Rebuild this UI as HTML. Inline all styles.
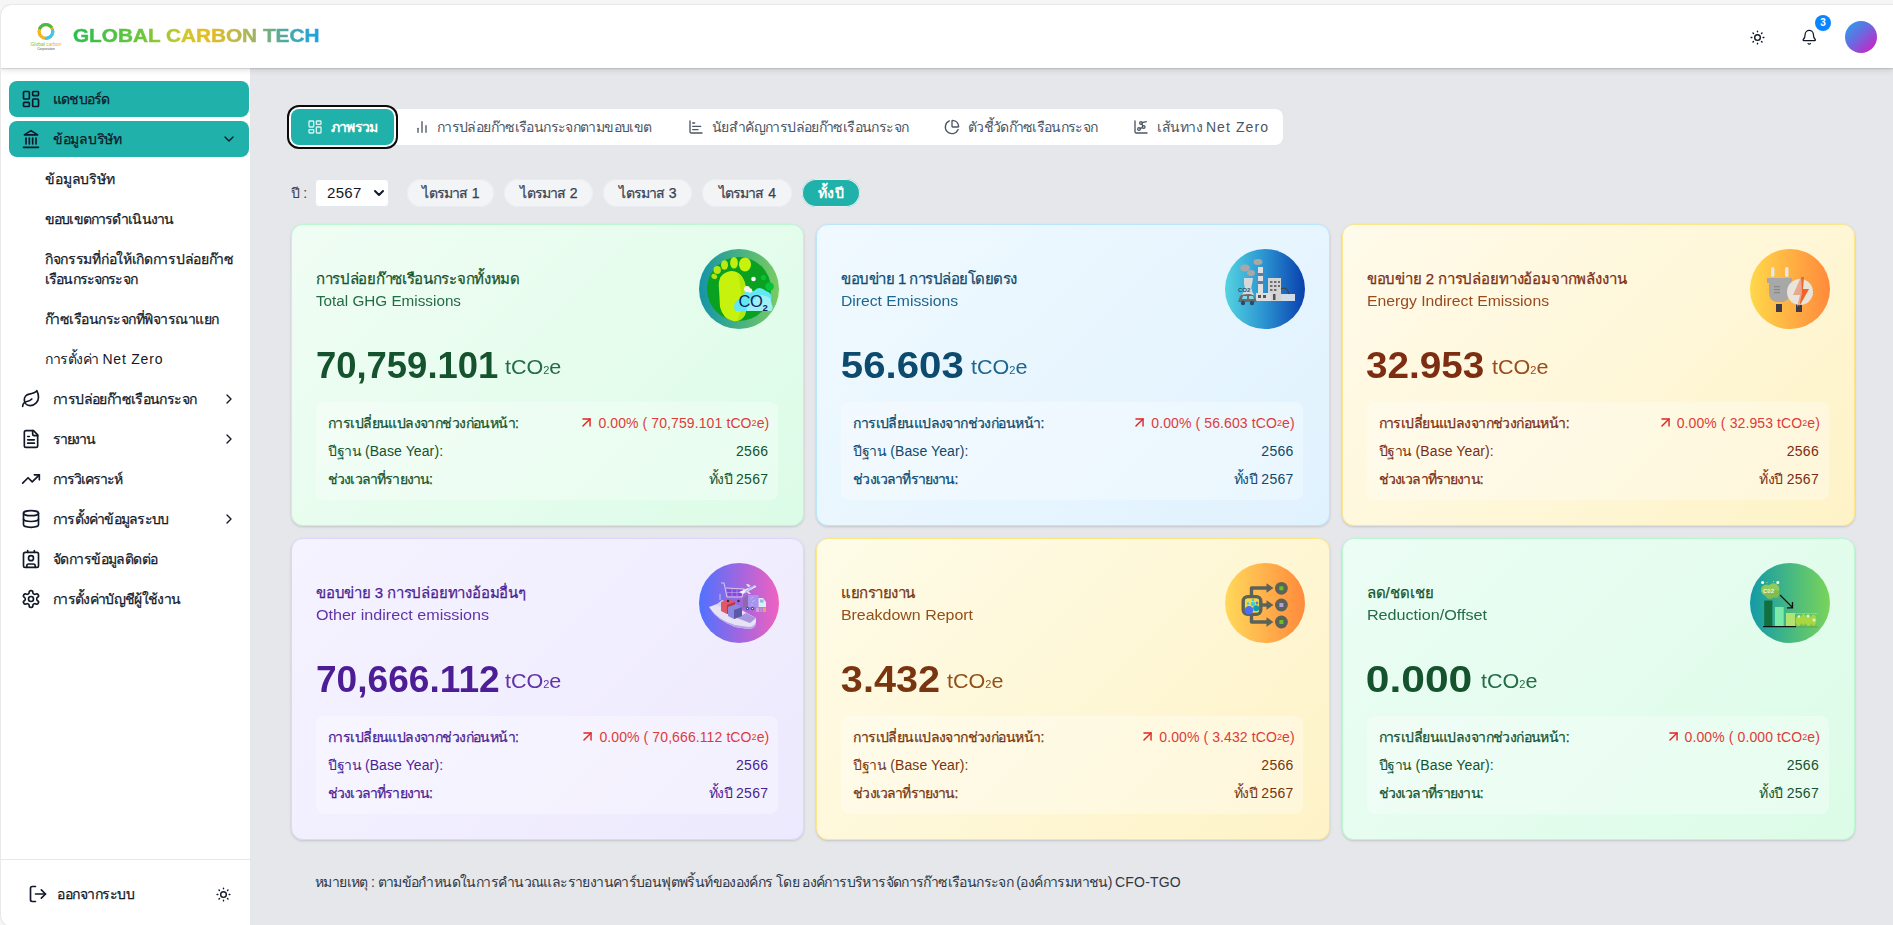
<!DOCTYPE html><html><head><meta charset="utf-8"><title>Global Carbon Tech</title><style>
*{box-sizing:border-box;margin:0;padding:0}
html,body{width:1893px;height:925px;overflow:hidden}
body{background:#f6f6f6;font-family:"Liberation Sans",sans-serif;color:#111827;position:relative}
.frame{position:absolute;left:1px;top:5px;width:1930px;height:921px;border-radius:10px;overflow:hidden;background:#e5e7eb;box-shadow:0 0 1.5px rgba(0,0,0,.28)}
.c{position:absolute;left:-1px;top:-5px;width:1893px;height:925px}
.abs{position:absolute}
.t{position:absolute;white-space:nowrap}
svg.i{position:absolute;fill:none;stroke:currentColor;stroke-linecap:round;stroke-linejoin:round;overflow:visible}
.hdr{position:absolute;z-index:5;left:0;top:5px;width:1893px;height:63px;background:#fff;box-shadow:0 1px 1px rgba(0,0,0,.10),0 2px 6px rgba(0,0,0,.12)}
.side{position:absolute;left:0;top:68px;width:250px;height:870px;background:#fff}
.mi{position:absolute;left:9px;width:240px;height:36px;border-radius:8px;background:#20b2aa}
.card{position:absolute;width:513.33px;height:302px;border-radius:12px;border:1px solid;box-shadow:0 1px 3px rgba(0,0,0,.10),0 1px 2px rgba(0,0,0,.06)}
.stat{position:absolute;width:462px;height:98px;border-radius:8px;background:rgba(255,255,255,.32)}
.pill{position:absolute;top:179px;height:28px;border-radius:14px;background:#f3f4f6;box-shadow:0 0 0 1px #e9edf2 inset}
</style></head><body>
<div class="frame"><div class="c">
<div class="hdr"></div><div class="abs" style="left:0;top:0;width:1893px;height:68px;z-index:6">
<svg class="abs" style="left:28px;top:19px;width:36px;height:34px" viewBox="0 0 36 34">
<g fill="none" stroke-width="3.3"><circle cx="17.9" cy="12.4" r="6.8" stroke="#f5b51c"/><circle cx="17.9" cy="12.4" r="6.8" stroke="#4cb848" stroke-dasharray="15 28" transform="rotate(-160 17.9 12.4)"/><circle cx="17.9" cy="12.4" r="6.8" stroke="#3cc8f0" stroke-dasharray="14 29" transform="rotate(-20 17.9 12.4)"/></g><circle cx="17.9" cy="12.4" r="5" fill="#fff"/>
<text x="18" y="27" font-size="5" text-anchor="middle" fill="#7cc242" font-family="Liberation Sans">Global <tspan fill="#f0b020">carbon</tspan></text>
<text x="18" y="31" font-size="3.4" text-anchor="middle" fill="#555" font-family="Liberation Sans">Corporation</text>
</svg>
<div class="t" style="left:73px;top:22.5px;font-size:19px;line-height:26px;font-weight:bold;transform:scaleX(1.093);transform-origin:1px 0;-webkit-text-stroke:0.5px transparent;background:linear-gradient(90deg,#2bbd4f 0%,#6cc63c 28%,#cfc72a 45%,#e5bd22 55%,#a9b55e 72%,#5fab8e 82%,#17a2e6 100%);-webkit-background-clip:text;background-clip:text;color:transparent">GLOBAL CARBON TECH</div>
<svg class="i" style="left:1748.5px;top:28.5px;width:17px;height:17px;color:#111827;stroke-width:2" viewBox="0 0 24 24" ><circle cx="12" cy="12" r="4"/><path d="M12 3v1"/><path d="M12 20v1"/><path d="M3 12h1"/><path d="M20 12h1"/><path d="m18.364 5.636-.707.707"/><path d="m6.343 17.657-.707.707"/><path d="m5.636 5.636.707.707"/><path d="m17.657 17.657.707.707"/></svg>
<svg class="i" style="left:1801px;top:29px;width:16.5px;height:16.5px;color:#111827;stroke-width:1.8" viewBox="0 0 24 24" ><path d="M10.268 21a2 2 0 0 0 3.464 0"/><path d="M3.262 15.326A1 1 0 0 0 4 17h16a1 1 0 0 0 .74-1.673C19.41 13.956 18 12.499 18 8A6 6 0 0 0 6 8c0 4.499-1.411 5.956-2.738 7.326"/></svg>
<div class="abs" style="left:1815px;top:15px;width:16px;height:16px;border-radius:8px;background:#0a84ff;color:#fff;font-size:10px;font-weight:bold;line-height:16px;text-align:center">3</div>
<div class="abs" style="left:1845px;top:21px;width:32px;height:32px;border-radius:16px;background:linear-gradient(135deg,#22a6f0 0%,#6a6ae0 45%,#e014bf 100%)"></div>
</div>
<div class="side"></div>
<div class="mi" style="top:81px"></div><div class="mi" style="top:121px"></div>
<svg class="i" style="left:21px;top:89px;width:20px;height:20px;color:#0f172a;stroke-width:2" viewBox="0 0 24 24" ><rect width="7" height="9" x="3" y="3" rx="1"/><rect width="7" height="5" x="14" y="3" rx="1"/><rect width="7" height="9" x="14" y="12" rx="1"/><rect width="7" height="5" x="3" y="16" rx="1"/></svg>
<div class="t" style="top:89.0px;font-size:14px;color:#0f172a;font-weight:normal;line-height:20px;letter-spacing:-0.833px;left:53px;-webkit-text-stroke:0.25px currentColor;">แดชบอร์ด</div>
<svg class="i" style="left:21px;top:129px;width:20px;height:20px;color:#0f172a;stroke-width:2" viewBox="0 0 24 24" ><line x1="3" x2="21" y1="22" y2="22"/><line x1="6" x2="6" y1="18" y2="11"/><line x1="10" x2="10" y1="18" y2="11"/><line x1="14" x2="14" y1="18" y2="11"/><line x1="18" x2="18" y1="18" y2="11"/><polygon points="12 2 20 7 4 7"/></svg>
<div class="t" style="top:129.0px;font-size:14px;color:#0f172a;font-weight:normal;line-height:20px;letter-spacing:-0.286px;left:53px;-webkit-text-stroke:0.25px currentColor;">ข้อมูลบริษัท</div>
<svg class="i" style="left:221px;top:131px;width:16px;height:16px;color:#0f172a;stroke-width:2" viewBox="0 0 24 24" ><path d="m6 9 6 6 6-6"/></svg>
<div class="t" style="top:169.0px;font-size:14px;color:#111827;font-weight:normal;line-height:20px;letter-spacing:-0.143px;left:45px;-webkit-text-stroke:0.25px currentColor;">ข้อมูลบริษัท</div>
<div class="t" style="top:209.0px;font-size:14px;color:#111827;font-weight:normal;line-height:20px;letter-spacing:-0.867px;left:45px;-webkit-text-stroke:0.25px currentColor;">ขอบเขตการดำเนินงาน</div>
<div class="t" style="top:249.0px;font-size:14px;color:#111827;font-weight:normal;line-height:20px;letter-spacing:-0.304px;left:45px;-webkit-text-stroke:0.25px currentColor;">กิจกรรมที่ก่อให้เกิดการปล่อยก๊าซ</div>
<div class="t" style="top:269.0px;font-size:14px;color:#111827;font-weight:normal;line-height:20px;letter-spacing:-0.858px;left:45px;-webkit-text-stroke:0.25px currentColor;">เรือนกระจกระจก</div>
<div class="t" style="top:309.0px;font-size:14px;color:#111827;font-weight:normal;line-height:20px;letter-spacing:-0.524px;left:45px;-webkit-text-stroke:0.25px currentColor;">ก๊าซเรือนกระจกที่พิจารณาแยก</div>
<div class="t" style="left:45px;top:349px;font-size:14px;line-height:20px;color:#111827"><span style="letter-spacing:-0.5px">การตั้งค่า</span> <span style="letter-spacing:0.8px">Net Zero</span></div>
<svg class="i" style="left:21px;top:389px;width:20px;height:20px;color:#111827;stroke-width:2" viewBox="0 0 24 24" ><path d="M11 20A7 7 0 0 1 9.8 6.1C15.5 5 17 4.48 19 2c1 2 2 4.18 2 8 0 5.5-4.78 10-10 10Z"/><path d="M2 21c0-3 1.85-5.36 5.08-6C9.5 14.52 12 13 13 12"/></svg>
<div class="t" style="top:389.0px;font-size:14px;color:#111827;font-weight:normal;line-height:20px;letter-spacing:-0.611px;left:53px;-webkit-text-stroke:0.25px currentColor;">การปล่อยก๊าซเรือนกระจก</div>
<svg class="i" style="left:221px;top:391px;width:16px;height:16px;color:#111827;stroke-width:2" viewBox="0 0 24 24" ><path d="m9 18 6-6-6-6"/></svg>
<svg class="i" style="left:21px;top:429px;width:20px;height:20px;color:#111827;stroke-width:2" viewBox="0 0 24 24" ><path d="M15 2H6a2 2 0 0 0-2 2v16a2 2 0 0 0 2 2h12a2 2 0 0 0 2-2V7Z"/><path d="M14 2v4a2 2 0 0 0 2 2h4"/><path d="M10 9H8"/><path d="M16 13H8"/><path d="M16 17H8"/></svg>
<div class="t" style="top:429.0px;font-size:14px;color:#111827;font-weight:normal;line-height:20px;letter-spacing:-1.2px;left:53px;-webkit-text-stroke:0.25px currentColor;">รายงาน</div>
<svg class="i" style="left:221px;top:431px;width:16px;height:16px;color:#111827;stroke-width:2" viewBox="0 0 24 24" ><path d="m9 18 6-6-6-6"/></svg>
<svg class="i" style="left:21px;top:469px;width:20px;height:20px;color:#111827;stroke-width:2" viewBox="0 0 24 24" ><polyline points="22 7 13.5 15.5 8.5 10.5 2 17"/><polyline points="16 7 22 7 22 13"/></svg>
<div class="t" style="top:469.0px;font-size:14px;color:#111827;font-weight:normal;line-height:20px;letter-spacing:-1.0px;left:53px;-webkit-text-stroke:0.25px currentColor;">การวิเคราะห์</div>
<svg class="i" style="left:21px;top:509px;width:20px;height:20px;color:#111827;stroke-width:2" viewBox="0 0 24 24" ><ellipse cx="12" cy="5" rx="9" ry="3"/><path d="M3 5V19A9 3 0 0 0 21 19V5"/><path d="M3 12A9 3 0 0 0 21 12"/></svg>
<div class="t" style="top:509.0px;font-size:14px;color:#111827;font-weight:normal;line-height:20px;letter-spacing:-0.786px;left:53px;-webkit-text-stroke:0.25px currentColor;">การตั้งค่าข้อมูลระบบ</div>
<svg class="i" style="left:221px;top:511px;width:16px;height:16px;color:#111827;stroke-width:2" viewBox="0 0 24 24" ><path d="m9 18 6-6-6-6"/></svg>
<svg class="i" style="left:21px;top:549px;width:20px;height:20px;color:#111827;stroke-width:2" viewBox="0 0 24 24" ><path d="M16 2v2"/><path d="M7 22v-2a2 2 0 0 1 2-2h6a2 2 0 0 1 2 2v2"/><path d="M8 2v2"/><circle cx="12" cy="11" r="3"/><rect x="3" y="4" width="18" height="18" rx="2"/></svg>
<div class="t" style="top:549.0px;font-size:14px;color:#111827;font-weight:normal;line-height:20px;letter-spacing:-0.583px;left:53px;-webkit-text-stroke:0.25px currentColor;">จัดการข้อมูลติดต่อ</div>
<svg class="i" style="left:21px;top:589px;width:20px;height:20px;color:#111827;stroke-width:2" viewBox="0 0 24 24" ><path d="M12.22 2h-.44a2 2 0 0 0-2 2v.18a2 2 0 0 1-1 1.73l-.43.25a2 2 0 0 1-2 0l-.15-.08a2 2 0 0 0-2.73.73l-.22.38a2 2 0 0 0 .73 2.73l.15.1a2 2 0 0 1 1 1.72v.51a2 2 0 0 1-1 1.74l-.15.09a2 2 0 0 0-.73 2.73l.22.38a2 2 0 0 0 2.73.73l.15-.08a2 2 0 0 1 2 0l.43.25a2 2 0 0 1 1 1.73V20a2 2 0 0 0 2 2h.44a2 2 0 0 0 2-2v-.18a2 2 0 0 1 1-1.73l.43-.25a2 2 0 0 1 2 0l.15.08a2 2 0 0 0 2.73-.73l.22-.39a2 2 0 0 0-.73-2.73l-.15-.08a2 2 0 0 1-1-1.74v-.5a2 2 0 0 1 1-1.74l.15-.09a2 2 0 0 0 .73-2.73l-.22-.38a2 2 0 0 0-2.73-.73l-.15.08a2 2 0 0 1-2 0l-.43-.25a2 2 0 0 1-1-1.73V4a2 2 0 0 0-2-2z"/><circle cx="12" cy="12" r="3"/></svg>
<div class="t" style="top:589.0px;font-size:14px;color:#111827;font-weight:normal;line-height:20px;letter-spacing:-0.667px;left:53px;-webkit-text-stroke:0.25px currentColor;">การตั้งค่าบัญชีผู้ใช้งาน</div>
<div class="abs" style="left:0;top:859px;width:250px;height:1px;background:#e2e8f0"></div>
<svg class="i" style="left:28px;top:884px;width:20px;height:20px;color:#111827;stroke-width:2" viewBox="0 0 24 24" ><path d="M9 21H5a2 2 0 0 1-2-2V5a2 2 0 0 1 2-2h4"/><polyline points="16 17 21 12 16 7"/><line x1="21" x2="9" y1="12" y2="12"/></svg>
<div class="t" style="top:884.0px;font-size:14px;color:#111827;font-weight:normal;line-height:20px;letter-spacing:-0.444px;left:57px;-webkit-text-stroke:0.25px currentColor;">ออกจากระบบ</div>
<svg class="i" style="left:214.5px;top:885.5px;width:17px;height:17px;color:#111827;stroke-width:2" viewBox="0 0 24 24" ><circle cx="12" cy="12" r="4"/><path d="M12 3v1"/><path d="M12 20v1"/><path d="M3 12h1"/><path d="M20 12h1"/><path d="m18.364 5.636-.707.707"/><path d="m6.343 17.657-.707.707"/><path d="m5.636 5.636.707.707"/><path d="m17.657 17.657.707.707"/></svg>
<div class="abs" style="left:291px;top:109px;width:992px;height:36px;border-radius:8px;background:#fff"></div>
<div class="abs" style="left:291px;top:109px;width:103px;height:36px;border-radius:8px;background:#20b2aa;box-shadow:0 0 0 2px #fff,0 0 0 4px #0b0b0b"></div>
<svg class="i" style="left:307px;top:119px;width:16px;height:16px;color:#d9f3f1;stroke-width:2" viewBox="0 0 24 24" ><rect width="7" height="9" x="3" y="3" rx="1"/><rect width="7" height="5" x="14" y="3" rx="1"/><rect width="7" height="9" x="14" y="12" rx="1"/><rect width="7" height="5" x="3" y="16" rx="1"/></svg>
<div class="t" style="top:117.0px;font-size:14px;color:#fff;font-weight:bold;line-height:20px;letter-spacing:-0.8px;left:331px;">ภาพรวม</div>
<svg class="i" style="left:414px;top:119px;width:16px;height:16px;color:#4b5563;stroke-width:2" viewBox="0 0 24 24" ><line x1="18" x2="18" y1="20" y2="10"/><line x1="12" x2="12" y1="20" y2="4"/><line x1="6" x2="6" y1="20" y2="14"/></svg>
<div class="t" style="top:117.0px;font-size:14px;color:#4b5563;font-weight:normal;line-height:20px;letter-spacing:-0.63px;left:437px;">การปล่อยก๊าซเรือนกระจกตามขอบเขต</div>
<svg class="i" style="left:688px;top:119px;width:16px;height:16px;color:#4b5563;stroke-width:2" viewBox="0 0 24 24" ><path d="M3 3v16a2 2 0 0 0 2 2h16"/><path d="M7 16h8"/><path d="M7 11h12"/><path d="M7 6h3"/></svg>
<div class="t" style="top:117.0px;font-size:14px;color:#4b5563;font-weight:normal;line-height:20px;letter-spacing:-0.609px;left:712px;">นัยสำคัญการปล่อยก๊าซเรือนกระจก</div>
<svg class="i" style="left:944px;top:119px;width:16px;height:16px;color:#4b5563;stroke-width:2" viewBox="0 0 24 24" ><path d="M21 12c.552 0 1.005-.449.95-.998a10 10 0 0 0-8.953-8.951c-.55-.055-.998.398-.998.95v8a1 1 0 0 0 1 1z"/><path d="M21.21 15.89A10 10 0 1 1 8 2.83"/></svg>
<div class="t" style="top:117.0px;font-size:14px;color:#4b5563;font-weight:normal;line-height:20px;letter-spacing:-0.688px;left:968px;">ตัวชี้วัดก๊าซเรือนกระจก</div>
<svg class="i" style="left:1133px;top:119px;width:16px;height:16px;color:#4b5563;stroke-width:2" viewBox="0 0 24 24" ><path d="m13.11 7.664 1.78 2.672"/><path d="m14.162 12.788-3.324 1.424"/><path d="m20 4-6.06 1.515"/><path d="M3 3v16a2 2 0 0 0 2 2h16"/><circle cx="12" cy="6" r="2"/><circle cx="16" cy="12" r="2"/><circle cx="9" cy="15" r="2"/></svg>
<div class="t" style="left:1157px;top:117px;font-size:14px;line-height:20px;color:#4b5563"><span style="letter-spacing:-0.5px">เส้นทาง</span> <span style="letter-spacing:1.1px">Net Zero</span></div>
<div class="t" style="top:183.0px;font-size:14px;color:#374151;font-weight:normal;line-height:20px;letter-spacing:-0.3px;left:291px;">ปี :</div>
<div class="abs" style="left:315px;top:179px;width:74px;height:28px;border-radius:4px;background:#fff;border:1px solid #e3e8ef"></div>
<div class="t" style="top:183.0px;font-size:15px;color:#111827;font-weight:normal;line-height:20px;letter-spacing:0.3px;left:327px;">2567</div>
<svg class="i" style="left:371px;top:185px;width:16px;height:16px;color:#111827;stroke-width:3" viewBox="0 0 24 24" ><path d="m6 9 6 6 6-6"/></svg>
<div class="pill" style="left:407px;width:87px"></div>
<div class="t" style="left:407px;width:87px;top:183px;line-height:20px;font-size:14px;text-align:center;color:#374151;letter-spacing:-0.95px;word-spacing:2px;-webkit-text-stroke:0.25px currentColor;">ไตรมาส 1</div>
<div class="pill" style="left:504px;width:89px"></div>
<div class="t" style="left:504px;width:89px;top:183px;line-height:20px;font-size:14px;text-align:center;color:#374151;letter-spacing:-0.95px;word-spacing:2px;-webkit-text-stroke:0.25px currentColor;">ไตรมาส 2</div>
<div class="pill" style="left:603px;width:89px"></div>
<div class="t" style="left:603px;width:89px;top:183px;line-height:20px;font-size:14px;text-align:center;color:#374151;letter-spacing:-0.95px;word-spacing:2px;-webkit-text-stroke:0.25px currentColor;">ไตรมาส 3</div>
<div class="pill" style="left:702px;width:90px"></div>
<div class="t" style="left:702px;width:90px;top:183px;line-height:20px;font-size:14px;text-align:center;color:#374151;letter-spacing:-0.95px;word-spacing:2px;-webkit-text-stroke:0.25px currentColor;">ไตรมาส 4</div>
<div class="pill" style="left:802px;width:58px;background:#20b2aa"></div>
<div class="t" style="left:802px;width:58px;top:183px;line-height:20px;font-size:14px;text-align:center;color:#fff;font-weight:bold;letter-spacing:0.25px">ทั้งปี</div>
<div class="card" style="left:291px;top:224px;background:linear-gradient(135deg,#f0fdf4,#dcfce7);border-color:#bbf7d0"></div>
<div class="t" style="top:269.0px;font-size:15px;color:#14532d;font-weight:normal;line-height:20px;letter-spacing:-0.304px;left:316px;-webkit-text-stroke:0.25px currentColor;">การปล่อยก๊าซเรือนกระจกทั้งหมด</div>
<div class="t" style="top:291.0px;font-size:14px;color:#246b47;font-weight:normal;line-height:20px;left:316px;transform:scaleX(1.0905);transform-origin:0.8px 0;">Total GHG Emissions</div>
<svg class="abs" style="left:699.3299999999999px;top:249px;width:80px;height:80px" viewBox="0 0 80 80"><defs><linearGradient id="gco2" x1="0" x2="1"><stop offset="0" stop-color="#1494a8"/><stop offset="1" stop-color="#78cc60"/></linearGradient></defs>
<circle cx="40" cy="40" r="40" fill="url(#gco2)"/><circle cx="40" cy="40" r="32" fill="#0aa020"/>
<path d="M20 40 Q18 24 32 22 Q44 22 47 38 Q49 56 46 66 Q42 73 34 72 Q24 70 21 58 Z" fill="#c6f20e"/>
<path d="M38 24 Q45 28 47 40 Q49 56 46 66 Q43 71 38 72 Q44 60 42 44 Q41 30 38 24 Z" fill="#b2e80c"/>
<ellipse cx="46" cy="15.5" rx="6" ry="7" fill="#c6f20e"/><ellipse cx="35" cy="13.8" rx="3.9" ry="5.8" fill="#bfee12"/><ellipse cx="25.5" cy="16" rx="3.5" ry="4.8" fill="#bce914"/><ellipse cx="18.2" cy="21" rx="3.7" ry="3.9" fill="#b8e614"/><ellipse cx="15.3" cy="27.5" rx="3" ry="2.4" fill="#b4e214" transform="rotate(25 15.3 27.5)"/>
<circle cx="64.5" cy="28.5" r="2.6" fill="#06c238"/><circle cx="70.5" cy="37.5" r="4.3" fill="#06c238"/>
<path d="M36 62 Q33 52 41 50 Q45 40 55 42 Q60 36 67 42 Q74 44 72 52 Q75 58 72 62 Z" fill="#62e8f2"/>
<path d="M48 62 Q46 52 56 50 Q60 44 66 47 Q73 48 72 55 Q75 59 72 62 Z" fill="#9ef0f4"/>
<circle cx="54.5" cy="30" r="2.3" fill="#fff"/><circle cx="48" cy="40" r="3" fill="#fff0f0"/><circle cx="51" cy="41.5" r="2.2" fill="#fff0f0"/>
<text x="39.5" y="57.5" font-size="16.5" font-family="Liberation Sans" fill="#0b2460" letter-spacing="-.5">CO</text><text x="63.5" y="62" font-size="9.5" font-weight="bold" font-family="Liberation Sans" fill="#0b2460">2</text></svg>
<div class="t" style="left:315.5px;top:345.5px;line-height:40px;font-size:36px;font-weight:bold;color:#14532d;transform:scaleX(1.0117);transform-origin:1.5px 0">70,759.101</div>
<div class="t" style="left:505.2px;top:346.7px;line-height:40px;font-size:19.5px;transform:scaleX(1.105);transform-origin:0.8px 0;color:#246b47">tCO<span style="font-size:10px">2</span>e</div>
<div class="stat" style="left:316px;top:402px"></div>
<div class="t" style="top:412.5px;font-size:14px;color:#14532d;font-weight:normal;line-height:20px;letter-spacing:-0.579px;left:328px;-webkit-text-stroke:0.25px currentColor;">การเปลี่ยนแปลงจากช่วงก่อนหน้า:</div>
<div class="t" style="left:328px;top:441px;font-size:14px;line-height:20px;color:#14532d"><span style="letter-spacing:-0.5px">ปีฐาน</span> <span style="letter-spacing:0.1px">(Base Year):</span></div>
<div class="t" style="top:469.0px;font-size:14px;color:#14532d;font-weight:normal;line-height:20px;letter-spacing:-0.849px;left:328px;-webkit-text-stroke:0.25px currentColor;">ช่วงเวลาที่รายงาน:</div>
<div class="t" style="right:1123.67px;top:412.5px;font-size:14px;line-height:20px;color:#df3b3b;letter-spacing:0.1px;display:flex;align-items:center"><svg style="width:17px;height:17px;margin-right:3px;fill:none;stroke:#e02424;stroke-width:2;stroke-linecap:round;stroke-linejoin:round" viewBox="0 0 24 24"><path d="M7 7h10v10"/><path d="M7 17 17 7"/></svg>0.00% ( 70,759.101 tCO<span style="font-size:9px">2</span>e)</div>
<div class="t" style="top:441.0px;font-size:14px;color:#14532d;font-weight:normal;line-height:20px;letter-spacing:0.3px;right:1124.67px;text-align:right;">2566</div>
<div class="t" style="right:1124.67px;top:469px;font-size:14px;line-height:20px;color:#14532d"><span style="letter-spacing:-0.5px">ทั้งปี</span> <span style="letter-spacing:0.3px">2567</span></div>
<div class="card" style="left:816.33px;top:224px;background:linear-gradient(135deg,#f0f9ff,#e0f2fe);border-color:#bae6fd"></div>
<div class="t" style="top:269.0px;font-size:15px;color:#0c4a6e;font-weight:normal;line-height:20px;letter-spacing:-0.509px;left:841.33px;-webkit-text-stroke:0.25px currentColor;">ขอบข่าย 1 การปล่อยโดยตรง</div>
<div class="t" style="top:291.0px;font-size:14px;color:#1d6690;font-weight:normal;line-height:20px;left:841.33px;transform:scaleX(1.1235);transform-origin:0.8px 0;">Direct Emissions</div>
<svg class="abs" style="left:1224.66px;top:249px;width:80px;height:80px" viewBox="0 0 80 80"><defs><linearGradient id="gfac" x1="0" x2="1"><stop offset="0" stop-color="#54d4e2"/><stop offset=".5" stop-color="#2a92d0"/><stop offset="1" stop-color="#0a3fae"/></linearGradient></defs>
<circle cx="40" cy="40" r="40" fill="url(#gfac)"/>
<ellipse cx="20" cy="19" rx="5" ry="3.5" fill="#a8a8a8"/><ellipse cx="26" cy="24" rx="4" ry="3" fill="#a8a8a8"/><ellipse cx="33" cy="13" rx="4.5" ry="3" fill="#a8a8a8"/>
<path d="M19 29 L28 29 L27 35 Q25 40 29 46 L17 46 Q21 40 19 35 Z" fill="#d8d8d8"/>
<rect x="33" y="18" width="5" height="28" fill="#e0e0e0"/><rect x="33" y="24" width="5" height="3" fill="#5a7fa0"/><rect x="33" y="32" width="5" height="3" fill="#5a7fa0"/>
<rect x="43" y="29" width="13" height="23" fill="#d4d4d4"/>
<g fill="#707070"><rect x="45" y="32" width="2.5" height="2"/><rect x="49" y="32" width="2.5" height="2"/><rect x="53" y="32" width="2" height="2"/><rect x="45" y="36" width="2.5" height="2"/><rect x="49" y="36" width="2.5" height="2"/><rect x="53" y="36" width="2" height="2"/><rect x="45" y="40" width="2.5" height="2"/><rect x="49" y="40" width="2.5" height="2"/></g>
<rect x="31" y="44" width="15" height="8" fill="#dedede"/><rect x="33" y="46" width="3" height="3" fill="#555"/><rect x="38" y="46" width="3" height="3" fill="#555"/><rect x="48" y="45" width="2.5" height="6" fill="#555"/>
<rect x="56" y="45" width="14" height="7" fill="#d0dcea"/><path d="M56 40 Q62 37 64 45" stroke="#444" stroke-width="1.2" fill="none"/>
<text x="13" y="43" font-size="6" font-weight="bold" font-family="Liberation Sans" fill="#2a5070">CO2</text>
<path d="M13 53 L15 47 Q17 45 24 45 Q28 45 30 49 L32 53 Z" fill="#6a6a6a"/><path d="M18 47 h4 v3 h-5 Z M24 47 h4 l1 3 h-5 Z" fill="#7fd8e8"/>
<circle cx="18" cy="54" r="2.2" fill="#2a4a6a"/><circle cx="27" cy="54" r="2.2" fill="#2a4a6a"/></svg>
<div class="t" style="left:840.83px;top:345.5px;line-height:40px;font-size:36px;font-weight:bold;color:#0c4a6e;transform:scaleX(1.1167);transform-origin:1.5px 0">56.603</div>
<div class="t" style="left:971.0300000000001px;top:346.7px;line-height:40px;font-size:19.5px;transform:scaleX(1.105);transform-origin:0.8px 0;color:#1d6690">tCO<span style="font-size:10px">2</span>e</div>
<div class="stat" style="left:841.33px;top:402px"></div>
<div class="t" style="top:412.5px;font-size:14px;color:#0c4a6e;font-weight:normal;line-height:20px;letter-spacing:-0.579px;left:853.33px;-webkit-text-stroke:0.25px currentColor;">การเปลี่ยนแปลงจากช่วงก่อนหน้า:</div>
<div class="t" style="left:853.33px;top:441px;font-size:14px;line-height:20px;color:#0c4a6e"><span style="letter-spacing:-0.5px">ปีฐาน</span> <span style="letter-spacing:0.1px">(Base Year):</span></div>
<div class="t" style="top:469.0px;font-size:14px;color:#0c4a6e;font-weight:normal;line-height:20px;letter-spacing:-0.849px;left:853.33px;-webkit-text-stroke:0.25px currentColor;">ช่วงเวลาที่รายงาน:</div>
<div class="t" style="right:598.3399999999999px;top:412.5px;font-size:14px;line-height:20px;color:#df3b3b;letter-spacing:0.1px;display:flex;align-items:center"><svg style="width:17px;height:17px;margin-right:3px;fill:none;stroke:#e02424;stroke-width:2;stroke-linecap:round;stroke-linejoin:round" viewBox="0 0 24 24"><path d="M7 7h10v10"/><path d="M7 17 17 7"/></svg>0.00% ( 56.603 tCO<span style="font-size:9px">2</span>e)</div>
<div class="t" style="top:441.0px;font-size:14px;color:#0c4a6e;font-weight:normal;line-height:20px;letter-spacing:0.3px;right:599.3399999999999px;text-align:right;">2566</div>
<div class="t" style="right:599.3399999999999px;top:469px;font-size:14px;line-height:20px;color:#0c4a6e"><span style="letter-spacing:-0.5px">ทั้งปี</span> <span style="letter-spacing:0.3px">2567</span></div>
<div class="card" style="left:1341.67px;top:224px;background:linear-gradient(135deg,#fffbeb,#fef3c7);border-color:#fde68a"></div>
<div class="t" style="top:269.0px;font-size:15px;color:#7c2d12;font-weight:normal;line-height:20px;letter-spacing:-0.156px;left:1366.67px;-webkit-text-stroke:0.25px currentColor;">ขอบข่าย 2 การปล่อยทางอ้อมจากพลังงาน</div>
<div class="t" style="top:291.0px;font-size:14px;color:#9a4a1e;font-weight:normal;line-height:20px;left:1366.67px;transform:scaleX(1.1253);transform-origin:0.8px 0;">Energy Indirect Emissions</div>
<svg class="abs" style="left:1750.0px;top:249px;width:80px;height:80px" viewBox="0 0 80 80"><defs><linearGradient id="gplug" x1="0" x2="1"><stop offset="0" stop-color="#ffd84a"/><stop offset="1" stop-color="#ff8a3c"/></linearGradient></defs>
<circle cx="40" cy="40" r="40" fill="url(#gplug)"/>
<rect x="21" y="18" width="3.5" height="10" rx="1.7" fill="#e8e6e0"/><rect x="35" y="18" width="3.5" height="10" rx="1.7" fill="#e8e6e0"/>
<path d="M17 29 h25 v5 h-2 v10 q0 7 -7 9 h-7 q-7 -2 -7 -9 v-10 h-2 Z" fill="#a8a8a8"/>
<rect x="24" y="37" width="6" height="1.2" fill="#888"/><rect x="24" y="40" width="6" height="1.2" fill="#888"/><rect x="24" y="43" width="6" height="1.2" fill="#888"/>
<rect x="26" y="55" width="6" height="8" fill="#3e3a48"/><rect x="46" y="55" width="6" height="8" fill="#3e3a48"/>
<circle cx="50" cy="43" r="13" fill="#e8e4da"/>
<path d="M51 28 L43 46 L50 46 L47 58 L59 40 L52 40 Z" fill="#e8a890"/><path d="M51 28 L54 28 L53 40 L59 40 L49 58 L52 44 Z" fill="#f06428"/></svg>
<div class="t" style="left:1366.17px;top:345.5px;line-height:40px;font-size:36px;font-weight:bold;color:#7c2d12;transform:scaleX(1.0756);transform-origin:1.5px 0">32.953</div>
<div class="t" style="left:1492.0700000000002px;top:346.7px;line-height:40px;font-size:19.5px;transform:scaleX(1.105);transform-origin:0.8px 0;color:#9a4a1e">tCO<span style="font-size:10px">2</span>e</div>
<div class="stat" style="left:1366.67px;top:402px"></div>
<div class="t" style="top:412.5px;font-size:14px;color:#7c2d12;font-weight:normal;line-height:20px;letter-spacing:-0.579px;left:1378.67px;-webkit-text-stroke:0.25px currentColor;">การเปลี่ยนแปลงจากช่วงก่อนหน้า:</div>
<div class="t" style="left:1378.67px;top:441px;font-size:14px;line-height:20px;color:#7c2d12"><span style="letter-spacing:-0.5px">ปีฐาน</span> <span style="letter-spacing:0.1px">(Base Year):</span></div>
<div class="t" style="top:469.0px;font-size:14px;color:#7c2d12;font-weight:normal;line-height:20px;letter-spacing:-0.849px;left:1378.67px;-webkit-text-stroke:0.25px currentColor;">ช่วงเวลาที่รายงาน:</div>
<div class="t" style="right:73.0px;top:412.5px;font-size:14px;line-height:20px;color:#df3b3b;letter-spacing:0.1px;display:flex;align-items:center"><svg style="width:17px;height:17px;margin-right:3px;fill:none;stroke:#e02424;stroke-width:2;stroke-linecap:round;stroke-linejoin:round" viewBox="0 0 24 24"><path d="M7 7h10v10"/><path d="M7 17 17 7"/></svg>0.00% ( 32.953 tCO<span style="font-size:9px">2</span>e)</div>
<div class="t" style="top:441.0px;font-size:14px;color:#7c2d12;font-weight:normal;line-height:20px;letter-spacing:0.3px;right:74.0px;text-align:right;">2566</div>
<div class="t" style="right:74.0px;top:469px;font-size:14px;line-height:20px;color:#7c2d12"><span style="letter-spacing:-0.5px">ทั้งปี</span> <span style="letter-spacing:0.3px">2567</span></div>
<div class="card" style="left:291px;top:538px;background:linear-gradient(135deg,#f5f3ff,#ede9fe);border-color:#ddd6fe"></div>
<div class="t" style="top:583.0px;font-size:15px;color:#4c1d95;font-weight:normal;line-height:20px;letter-spacing:-0.195px;left:316px;-webkit-text-stroke:0.25px currentColor;">ขอบข่าย 3 การปล่อยทางอ้อมอื่นๆ</div>
<div class="t" style="top:605.0px;font-size:14px;color:#6034a8;font-weight:normal;line-height:20px;left:316px;transform:scaleX(1.1530);transform-origin:0.8px 0;">Other indirect emissions</div>
<svg class="abs" style="left:699.3299999999999px;top:563px;width:80px;height:80px" viewBox="0 0 80 80"><defs><linearGradient id="gship" x1="0" x2="1"><stop offset="0" stop-color="#4f72ff"/><stop offset=".5" stop-color="#a066e0"/><stop offset="1" stop-color="#f062c0"/></linearGradient></defs>
<circle cx="40" cy="40" r="40" fill="url(#gship)"/>
<path d="M10 44 L26 38 L57 55 L57 61 Q55 66 50 66 L36 64 Q18 57 10 44 Z" fill="#e8e2f6"/>
<path d="M12 47 Q20 57 36 62 L50 64 Q55 64 57 59 L57 61 Q55 66 50 66 L36 64 Q18 57 12 47 Z" fill="#b8a8e8"/>
<path d="M38 55 L47 50 L57 55 L51 60 Z" fill="#a696e0"/>
<path d="M17 42 L23 37 L30 40 L24 45 Z" fill="#d8d2ee"/><path d="M21 37 V31" stroke="#d8d2ee" stroke-width=".8"/>
<path d="M22 39 L30 36 L36 39 L36 48 L28 51 L22 48 Z" fill="#e05868"/><path d="M28 42 L36 39 L36 48 L28 51 Z" fill="#b83848"/>
<path d="M29 44 L37 41 L43 44 L43 53 L35 56 L29 53 Z" fill="#8a88e0"/><path d="M35 47 L43 44 L43 53 L35 56 Z" fill="#5a5aa8"/>
<path d="M22 20 L25 20 L28 34 L43 34 L45 26 L27 25" stroke="#d0c8e8" stroke-width="1.1" fill="none"/><path d="M27.5 26 L44 27 L42.5 33 L29 33 Z" fill="#8848e0"/><g stroke="#c8b8f0" stroke-width=".5"><path d="M33 26v7M38 26.5v6.5M28 29.5h15"/></g>
<circle cx="29" cy="38" r="1.2" fill="#333"/><circle cx="39.5" cy="38" r="1.2" fill="#333"/>
<path d="M40 29 L55 22.5 Q58 22 57 24 L44 31 Z" fill="#f4f4ff"/><path d="M47 26 L52 31 L50 31 L45 27 Z" fill="#e0e0f4"/><path d="M49 24 L47 21 L49 21 L52 23 Z" fill="#e0e0f4"/><path d="M52 23 L57 22.5 L44 31 Z" fill="#6a80e0" opacity=".5"/>
<path d="M44 35 L49 32 L49 44 L44 45 Z" fill="#8a6aa8"/><rect x="49" y="32" width="10.5" height="12" fill="#a894f0"/><path d="M52 36 l2 -2 M53 39 l3 -2 M52 41 l2 1" stroke="#d8ccff" stroke-width=".6"/>
<path d="M59.5 35 L64 35 L67 39 L67 44 L59.5 44 Z" fill="#dcecf8"/><rect x="61" y="36.5" width="3.5" height="3" fill="#8ab8e8"/>
<circle cx="48.5" cy="45.5" r="1.7" fill="#3a5ab0"/><circle cx="53.5" cy="45.5" r="1.7" fill="#3a5ab0"/><circle cx="48.5" cy="45.5" r=".6" fill="#fff"/><circle cx="53.5" cy="45.5" r=".6" fill="#fff"/>
<rect x="57" y="44.5" width="3" height="4.5" fill="#d89ae8"/><rect x="60.5" y="44.5" width="3" height="4.5" fill="#a898d0"/><rect x="64" y="44.5" width="3" height="4.5" fill="#e8a070"/></svg>
<div class="t" style="left:315.5px;top:659.5px;line-height:40px;font-size:36px;font-weight:bold;color:#4c1d95;transform:scaleX(1.0313);transform-origin:1.5px 0">70,666.112</div>
<div class="t" style="left:505.2px;top:660.7px;line-height:40px;font-size:19.5px;transform:scaleX(1.105);transform-origin:0.8px 0;color:#6034a8">tCO<span style="font-size:10px">2</span>e</div>
<div class="stat" style="left:316px;top:716px"></div>
<div class="t" style="top:726.5px;font-size:14px;color:#4c1d95;font-weight:normal;line-height:20px;letter-spacing:-0.579px;left:328px;-webkit-text-stroke:0.25px currentColor;">การเปลี่ยนแปลงจากช่วงก่อนหน้า:</div>
<div class="t" style="left:328px;top:755px;font-size:14px;line-height:20px;color:#4c1d95"><span style="letter-spacing:-0.5px">ปีฐาน</span> <span style="letter-spacing:0.1px">(Base Year):</span></div>
<div class="t" style="top:783.0px;font-size:14px;color:#4c1d95;font-weight:normal;line-height:20px;letter-spacing:-0.849px;left:328px;-webkit-text-stroke:0.25px currentColor;">ช่วงเวลาที่รายงาน:</div>
<div class="t" style="right:1123.67px;top:726.5px;font-size:14px;line-height:20px;color:#df3b3b;letter-spacing:0.1px;display:flex;align-items:center"><svg style="width:17px;height:17px;margin-right:3px;fill:none;stroke:#e02424;stroke-width:2;stroke-linecap:round;stroke-linejoin:round" viewBox="0 0 24 24"><path d="M7 7h10v10"/><path d="M7 17 17 7"/></svg>0.00% ( 70,666.112 tCO<span style="font-size:9px">2</span>e)</div>
<div class="t" style="top:755.0px;font-size:14px;color:#4c1d95;font-weight:normal;line-height:20px;letter-spacing:0.3px;right:1124.67px;text-align:right;">2566</div>
<div class="t" style="right:1124.67px;top:783px;font-size:14px;line-height:20px;color:#4c1d95"><span style="letter-spacing:-0.5px">ทั้งปี</span> <span style="letter-spacing:0.3px">2567</span></div>
<div class="card" style="left:816.33px;top:538px;background:linear-gradient(135deg,#fefce8,#fef3c7);border-color:#fde68a"></div>
<div class="t" style="top:583.0px;font-size:15px;color:#78350f;font-weight:normal;line-height:20px;letter-spacing:-0.5px;left:841.33px;-webkit-text-stroke:0.25px currentColor;">แยกรายงาน</div>
<div class="t" style="top:605.0px;font-size:14px;color:#92501a;font-weight:normal;line-height:20px;left:841.33px;transform:scaleX(1.1396);transform-origin:0.8px 0;">Breakdown Report</div>
<svg class="abs" style="left:1224.66px;top:563px;width:80px;height:80px" viewBox="0 0 80 80"><defs><linearGradient id="gflow" x1="0" x2="1"><stop offset="0" stop-color="#ffd95a"/><stop offset="1" stop-color="#ff8a3c"/></linearGradient></defs>
<circle cx="40" cy="40" r="40" fill="url(#gflow)"/>
<g stroke="#5a625a" stroke-width="3.4" fill="none" stroke-linejoin="round"><path d="M26.5 33 V25 H43"/><path d="M26.5 52 V59 H43"/><path d="M37 42 H43"/><rect x="18.2" y="33.7" width="17.6" height="17.6" rx="4.5"/></g>
<g fill="#5a625a"><path d="M41.5 20.3 L48.5 25 L41.5 29.7 Z"/><path d="M41.5 37.3 L48.5 42 L41.5 46.7 Z"/><path d="M41.5 54.3 L48.5 59 L41.5 63.7 Z"/><circle cx="56.4" cy="25.3" r="6.4"/><circle cx="56.4" cy="42" r="6.4"/><circle cx="56.4" cy="59" r="6.4"/></g>
<rect x="20" y="35.5" width="14" height="14" rx="2.5" fill="#f0dc40"/><circle cx="24" cy="47.2" r="4.2" fill="#4a6cff"/><circle cx="31.2" cy="45.3" r="3" fill="#0e9cb0"/><circle cx="28" cy="41" r="2.2" fill="#40c8e8"/><circle cx="32" cy="40" r="1.4" fill="#6070ff"/><circle cx="23" cy="40.5" r="1.3" fill="#40c8e8"/><circle cx="28" cy="37" r="1.2" fill="#40c8e8"/>
<rect x="54.4" y="23.3" width="4" height="4" fill="#6ec020"/><rect x="54.4" y="40" width="4" height="4" fill="#b8a0d8"/><rect x="54.4" y="57" width="4" height="4" fill="#6ec020"/></svg>
<div class="t" style="left:840.83px;top:659.5px;line-height:40px;font-size:36px;font-weight:bold;color:#78350f;transform:scaleX(1.1010);transform-origin:1.5px 0">3.432</div>
<div class="t" style="left:946.5300000000001px;top:660.7px;line-height:40px;font-size:19.5px;transform:scaleX(1.105);transform-origin:0.8px 0;color:#92501a">tCO<span style="font-size:10px">2</span>e</div>
<div class="stat" style="left:841.33px;top:716px"></div>
<div class="t" style="top:726.5px;font-size:14px;color:#78350f;font-weight:normal;line-height:20px;letter-spacing:-0.579px;left:853.33px;-webkit-text-stroke:0.25px currentColor;">การเปลี่ยนแปลงจากช่วงก่อนหน้า:</div>
<div class="t" style="left:853.33px;top:755px;font-size:14px;line-height:20px;color:#78350f"><span style="letter-spacing:-0.5px">ปีฐาน</span> <span style="letter-spacing:0.1px">(Base Year):</span></div>
<div class="t" style="top:783.0px;font-size:14px;color:#78350f;font-weight:normal;line-height:20px;letter-spacing:-0.849px;left:853.33px;-webkit-text-stroke:0.25px currentColor;">ช่วงเวลาที่รายงาน:</div>
<div class="t" style="right:598.3399999999999px;top:726.5px;font-size:14px;line-height:20px;color:#df3b3b;letter-spacing:0.1px;display:flex;align-items:center"><svg style="width:17px;height:17px;margin-right:3px;fill:none;stroke:#e02424;stroke-width:2;stroke-linecap:round;stroke-linejoin:round" viewBox="0 0 24 24"><path d="M7 7h10v10"/><path d="M7 17 17 7"/></svg>0.00% ( 3.432 tCO<span style="font-size:9px">2</span>e)</div>
<div class="t" style="top:755.0px;font-size:14px;color:#78350f;font-weight:normal;line-height:20px;letter-spacing:0.3px;right:599.3399999999999px;text-align:right;">2566</div>
<div class="t" style="right:599.3399999999999px;top:783px;font-size:14px;line-height:20px;color:#78350f"><span style="letter-spacing:-0.5px">ทั้งปี</span> <span style="letter-spacing:0.3px">2567</span></div>
<div class="card" style="left:1341.67px;top:538px;background:linear-gradient(135deg,#ecfdf5,#dcfce7);border-color:#bbf7d0"></div>
<div class="t" style="top:583.0px;font-size:15px;color:#14532d;font-weight:normal;line-height:20px;letter-spacing:-0.025px;left:1366.67px;-webkit-text-stroke:0.25px currentColor;">ลด/ชดเชย</div>
<div class="t" style="top:605.0px;font-size:14px;color:#246b47;font-weight:normal;line-height:20px;left:1366.67px;transform:scaleX(1.1550);transform-origin:0.8px 0;">Reduction/Offset</div>
<svg class="abs" style="left:1750.0px;top:563px;width:80px;height:80px" viewBox="0 0 80 80"><defs><linearGradient id="gred" x1="0" x2="1"><stop offset="0" stop-color="#129aa8"/><stop offset=".5" stop-color="#46b882"/><stop offset="1" stop-color="#7ad45a"/></linearGradient></defs>
<circle cx="40" cy="40" r="40" fill="url(#gred)"/>
<circle cx="16.5" cy="27" r="5.5" fill="#8cc85a"/><circle cx="23.5" cy="26" r="5.8" fill="#90cc5c"/><circle cx="20" cy="31" r="5" fill="#80bc50"/><circle cx="25.5" cy="31" r="3.8" fill="#80bc50"/>
<text x="13" y="30.3" font-size="6" font-weight="bold" font-family="Liberation Sans" fill="#eef8e0">C02</text>
<circle cx="12.6" cy="19.6" r="1.5" fill="#fff"/><circle cx="27.8" cy="19.6" r="1.5" fill="#fff"/><circle cx="17" cy="19.5" r=".6" fill="#d8e860"/><circle cx="23.5" cy="18.5" r=".6" fill="#d8e860"/>
<rect x="14.2" y="37.5" width="8.2" height="26" fill="#127040"/><rect x="25" y="44" width="8.7" height="19.5" fill="#7aeaa8"/><rect x="36" y="50" width="9" height="13.5" fill="#b2e272"/>
<path d="M13 63.6 H46" stroke="#111" stroke-width="1.3"/><path d="M30 32 L42.5 44.5 M42.5 39 V44.8 H37" stroke="#111" stroke-width="1.3" fill="none"/>
<path d="M45 50.5 H68" stroke="#e8f4d8" stroke-width=".5" stroke-dasharray="1 .8"/>
<g fill="#a8d840"><ellipse cx="48.5" cy="58" rx="2.8" ry="5"/><ellipse cx="53.5" cy="56.5" rx="3" ry="5.5"/><ellipse cx="58.5" cy="58" rx="2.8" ry="5"/><ellipse cx="63.5" cy="57" rx="2.8" ry="5.5"/></g>
<g fill="#e8f0c0"><circle cx="49" cy="53.5" r="1.3"/><circle cx="58" cy="53" r="1.5"/><circle cx="64" cy="57" r="1.5"/></g><path d="M46 64 H68" stroke="#6aa040" stroke-width=".8"/></svg>
<div class="t" style="left:1366.17px;top:659.5px;line-height:40px;font-size:36px;font-weight:bold;color:#14532d;transform:scaleX(1.1823);transform-origin:1.5px 0">0.000</div>
<div class="t" style="left:1480.97px;top:660.7px;line-height:40px;font-size:19.5px;transform:scaleX(1.105);transform-origin:0.8px 0;color:#246b47">tCO<span style="font-size:10px">2</span>e</div>
<div class="stat" style="left:1366.67px;top:716px"></div>
<div class="t" style="top:726.5px;font-size:14px;color:#14532d;font-weight:normal;line-height:20px;letter-spacing:-0.579px;left:1378.67px;-webkit-text-stroke:0.25px currentColor;">การเปลี่ยนแปลงจากช่วงก่อนหน้า:</div>
<div class="t" style="left:1378.67px;top:755px;font-size:14px;line-height:20px;color:#14532d"><span style="letter-spacing:-0.5px">ปีฐาน</span> <span style="letter-spacing:0.1px">(Base Year):</span></div>
<div class="t" style="top:783.0px;font-size:14px;color:#14532d;font-weight:normal;line-height:20px;letter-spacing:-0.849px;left:1378.67px;-webkit-text-stroke:0.25px currentColor;">ช่วงเวลาที่รายงาน:</div>
<div class="t" style="right:73.0px;top:726.5px;font-size:14px;line-height:20px;color:#df3b3b;letter-spacing:0.1px;display:flex;align-items:center"><svg style="width:17px;height:17px;margin-right:3px;fill:none;stroke:#e02424;stroke-width:2;stroke-linecap:round;stroke-linejoin:round" viewBox="0 0 24 24"><path d="M7 7h10v10"/><path d="M7 17 17 7"/></svg>0.00% ( 0.000 tCO<span style="font-size:9px">2</span>e)</div>
<div class="t" style="top:755.0px;font-size:14px;color:#14532d;font-weight:normal;line-height:20px;letter-spacing:0.3px;right:74.0px;text-align:right;">2566</div>
<div class="t" style="right:74.0px;top:783px;font-size:14px;line-height:20px;color:#14532d"><span style="letter-spacing:-0.5px">ทั้งปี</span> <span style="letter-spacing:0.3px">2567</span></div>
<div class="t" style="left:315px;top:872px;font-size:14px;line-height:20px;color:#2f3744;letter-spacing:-0.615px">หมายเหตุ : ตามข้อกำหนดในการคำนวณและรายงานคาร์บอนฟุตพริ้นท์ขององค์กร โดย องค์การบริหารจัดการก๊าซเรือนกระจก (องค์การมหาชน) <span style="letter-spacing:0.2px">CFO-TGO</span></div>
</div></div></body></html>
